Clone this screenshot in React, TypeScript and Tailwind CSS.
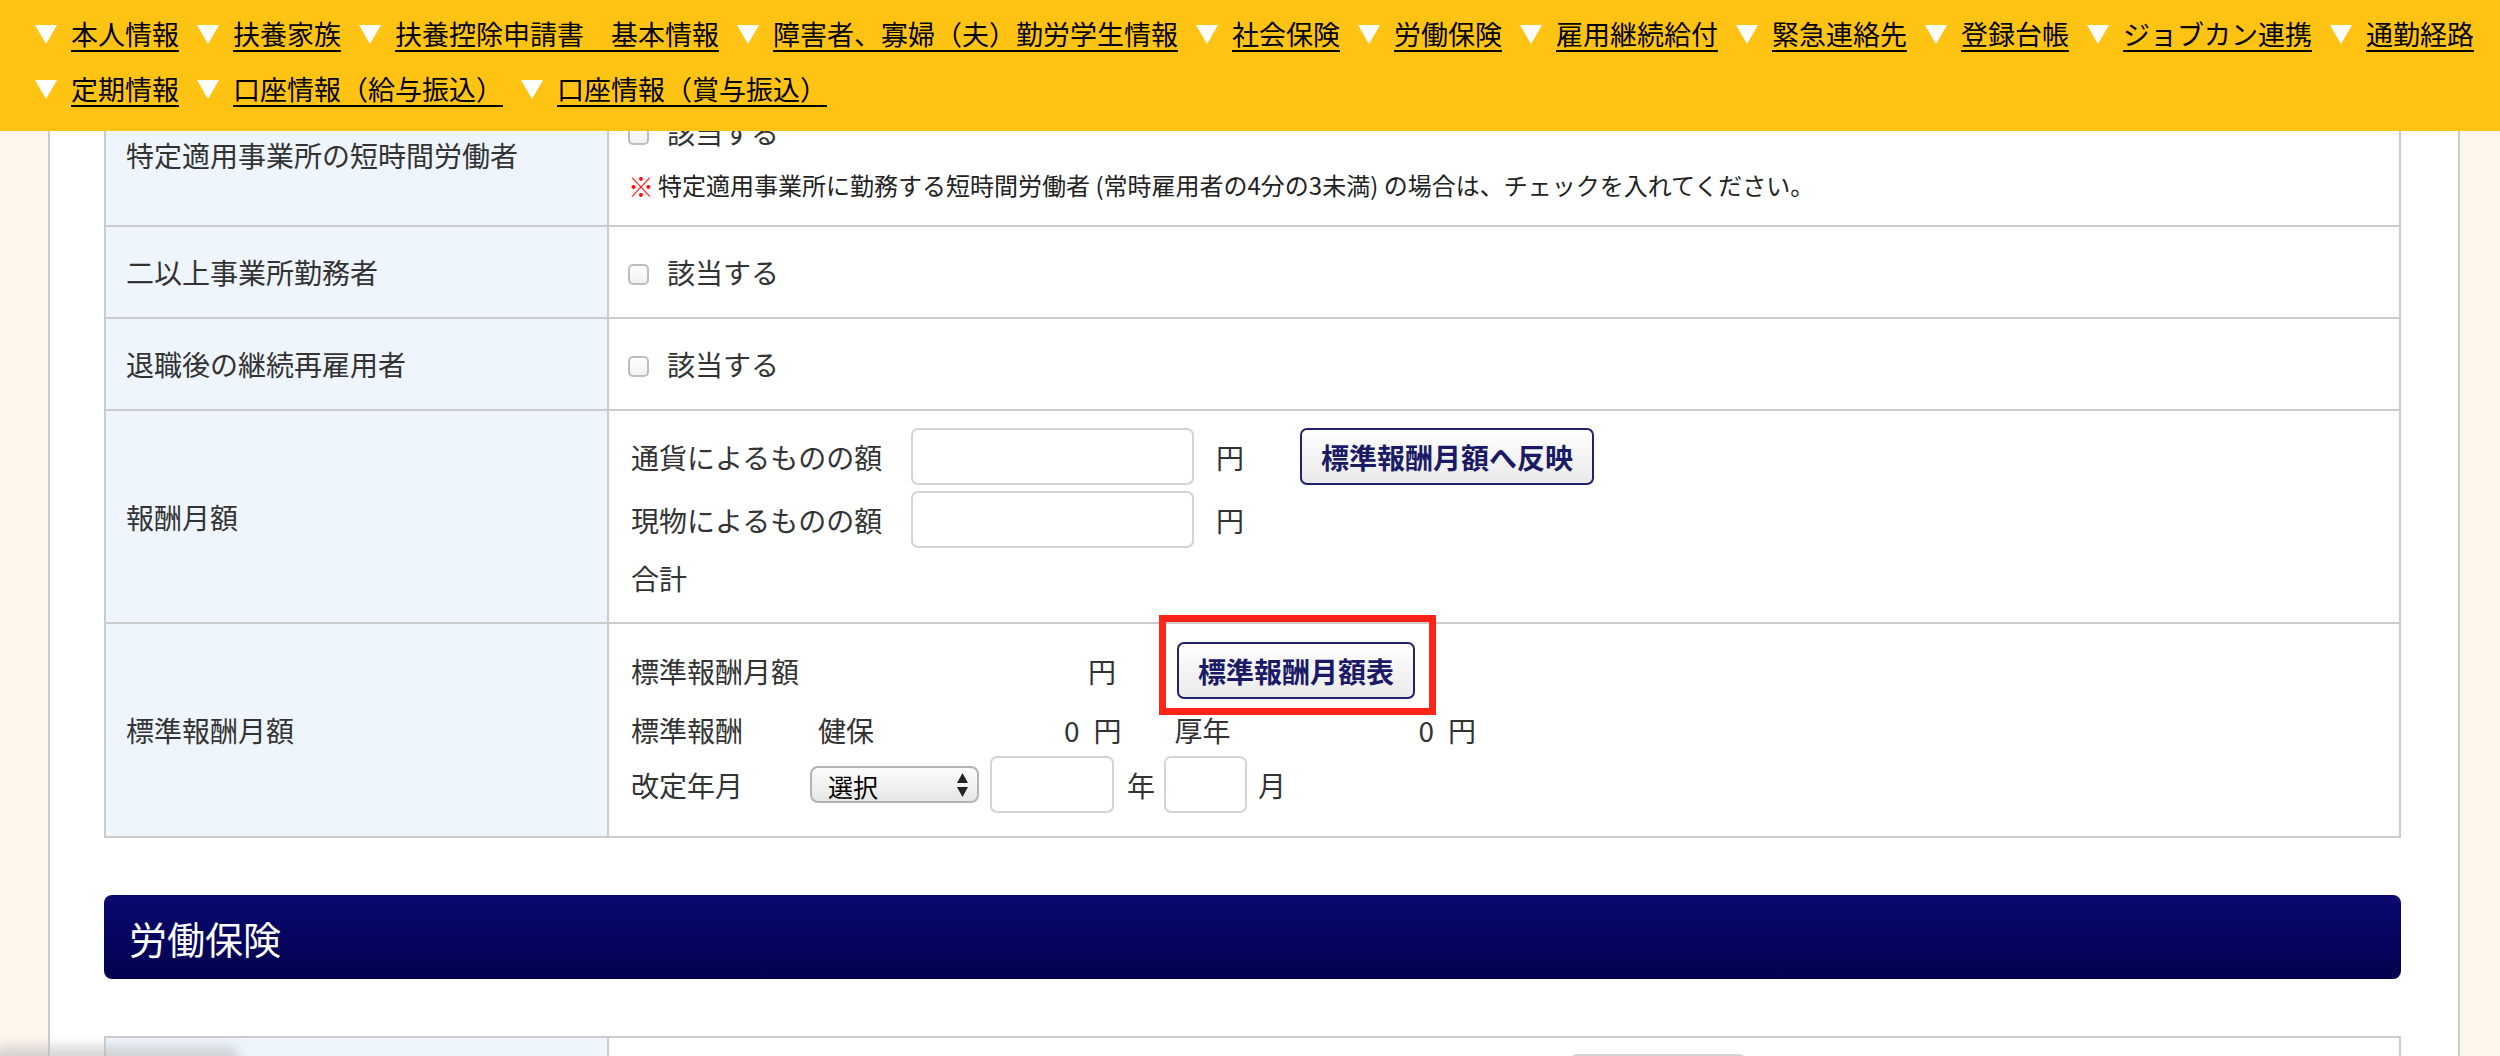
import React from "react";

const NAV_ROW_1 = [
  "本人情報",
  "扶養家族",
  "扶養控除申請書　基本情報",
  "障害者、寡婦（夫）勤労学生情報",
  "社会保険",
  "労働保険",
  "雇用継続給付",
  "緊急連絡先",
  "登録台帳",
  "ジョブカン連携",
  "通勤経路",
];
const NAV_ROW_2 = ["定期情報", "口座情報（給与振込）", "口座情報（賞与振込）"];

function Tri() {
  return (
    <svg width="22" height="19" viewBox="0 0 22 19" className="shrink-0">
      <polygon points="0,0 22,0 11,19" fill="#ffffff" />
    </svg>
  );
}

function NavRow({ items }: { items: string[] }) {
  return (
    <div className="flex h-[55px] items-center whitespace-nowrap pl-[35px]">
      {items.map((t) => (
        <a key={t} href="#" className="mr-[18px] flex items-center gap-[14px] text-black">
          <Tri />
          <span className="underline decoration-2 underline-offset-[5px]">{t}</span>
        </a>
      ))}
    </div>
  );
}

function Check() {
  return (
    <span className="mt-[4px] inline-block h-[21px] w-[21px] shrink-0 rounded-[5px] border-2 border-[#bdbdbd] bg-linear-to-b from-white to-[#f1f1f1]" />
  );
}

function TextBox({ className }: { className: string }) {
  return (
    <input
      type="text"
      readOnly
      className={`h-[57px] rounded-[7px] border-2 border-[#d4d4d4] bg-white ${className}`}
    />
  );
}

function NavyButton({ children }: { children: React.ReactNode }) {
  return (
    <button className="h-[57px] whitespace-nowrap rounded-[7px] border-2 border-[#22226e] bg-linear-to-b from-white to-[#eaeaea] px-[19px] text-[28px] font-bold leading-none text-[#1a1a66]">
      {children}
    </button>
  );
}

function Row({
  h,
  label,
  children,
}: {
  h: string;
  label: string;
  children: React.ReactNode;
}) {
  return (
    <div className={`grid grid-cols-[503px_1fr] border-b-2 border-[#cccccc] ${h}`}>
      <div className="flex items-center border-r-2 border-[#cccccc] bg-[#eef5fd] pl-[20px] text-[28px]">
        {label}
      </div>
      {children}
    </div>
  );
}

export default function App() {
  return (
    <div className="relative min-h-screen overflow-hidden bg-[#fdf6ec] font-['Noto_Sans_CJK_JP',sans-serif] text-[#333333]">
      <header className="fixed inset-x-0 top-0 z-20 bg-[#ffc314] pb-[14px] pt-[7px] text-[27px]">
        <NavRow items={NAV_ROW_1} />
        <NavRow items={NAV_ROW_2} />
      </header>

      <div className="ml-[48px] min-h-screen w-[2412px] border-x-2 border-[#cccccc] bg-white pl-[54px] pr-[57px] pt-[85px]">
        <div className="border-x-2 border-[#cccccc]">
          <Row h="h-[142px]" label="特定適用事業所の短時間労働者">
            <div className="flex flex-col pl-[19px] pt-[27px]">
              <div className="flex h-[40px] items-center gap-[18px] text-[28px]">
                <Check />
                <span>該当する</span>
              </div>
              <div className="mt-[15px] flex h-[36px] items-center text-[24px] text-[#222222]">
                <span className="text-[26px] font-bold text-[#ff1010]">※</span>
                <span className="ml-[4px]">
                  特定適用事業所に勤務する短時間労働者 (常時雇用者の4分の3未満) の場合は、チェックを入れてください。
                </span>
              </div>
            </div>
          </Row>

          <Row h="h-[92px]" label="二以上事業所勤務者">
            <div className="flex items-center gap-[18px] pl-[19px] text-[28px]">
              <Check />
              <span>該当する</span>
            </div>
          </Row>

          <Row h="h-[92px]" label="退職後の継続再雇用者">
            <div className="flex items-center gap-[18px] pl-[19px] text-[28px]">
              <Check />
              <span>該当する</span>
            </div>
          </Row>

          <Row h="h-[213px]" label="報酬月額">
            <div className="flex flex-col pl-[22px] pt-[17px] text-[28px]">
              <div className="flex h-[57px] items-center">
                <span className="w-[280px]">通貨によるものの額</span>
                <TextBox className="w-[283px]" />
                <span className="ml-[22px]">円</span>
                <div className="ml-[56px]">
                  <NavyButton>標準報酬月額へ反映</NavyButton>
                </div>
              </div>
              <div className="mt-[6px] flex h-[57px] items-center">
                <span className="w-[280px]">現物によるものの額</span>
                <TextBox className="w-[283px]" />
                <span className="ml-[22px]">円</span>
              </div>
              <div className="mt-[10px] flex h-[40px] items-center">
                <span>合計</span>
              </div>
            </div>
          </Row>

          <Row h="h-[214px]" label="標準報酬月額">
            <div className="flex flex-col pl-[22px] pt-[18px] text-[28px]">
              <div className="flex h-[57px] items-center">
                <span className="w-[457px]">標準報酬月額</span>
                <span>円</span>
                <div className="relative ml-[61px]">
                  <NavyButton>標準報酬月額表</NavyButton>
                  <div className="pointer-events-none absolute -bottom-[16px] -left-[18px] -right-[21px] -top-[27px] border-[7px] border-[#ff2418]" />
                </div>
              </div>
              <div className="mt-[11px] flex h-[40px] items-center">
                <span className="w-[187px]">標準報酬</span>
                <span className="w-[246px]">健保</span>
                <span>0</span>
                <span className="ml-[14px]">円</span>
                <span className="ml-[53px] w-[244px]">厚年</span>
                <span>0</span>
                <span className="ml-[14px]">円</span>
              </div>
              <div className="mt-[6px] flex h-[57px] items-center">
                <span className="w-[179px]">改定年月</span>
                <div className="flex h-[37px] w-[169px] items-center justify-between rounded-[8px] border-2 border-[#b4b4b4] bg-linear-to-b from-[#fdfdfd] to-[#e6e6e6] pl-[16px] pr-[9px] text-[25px] text-black">
                  <span className="pt-[3px] leading-[28px]">選択</span>
                  <svg width="11" height="24" viewBox="0 0 11 24">
                    <polygon points="0,10 5.5,0 11,10" fill="#222222" />
                    <polygon points="0,14 11,14 5.5,24" fill="#222222" />
                  </svg>
                </div>
                <TextBox className="ml-[11px] w-[124px]" />
                <span className="ml-[13px]">年</span>
                <TextBox className="ml-[9px] w-[83px]" />
                <span className="ml-[11px]">月</span>
              </div>
            </div>
          </Row>
        </div>

        <div className="mt-[57px] flex h-[84px] items-center rounded-[8px] bg-linear-to-b from-[#0a0a70] to-[#02024f] pl-[25px] text-[38px] text-white">
          労働保険
        </div>

        <div className="mt-[57px] border-x-2 border-t-2 border-[#cccccc]">
          <div className="grid h-[120px] grid-cols-[503px_1fr]">
            <div className="border-r-2 border-[#cccccc] bg-[#eef5fd]" />
            <div className="pl-[961px] pt-[16px]">
              <TextBox className="w-[176px]" />
            </div>
          </div>
        </div>
      </div>

      <div className="pointer-events-none fixed -bottom-[30px] left-[-10px] h-[40px] w-[250px] rounded-[16px] bg-[#bdbdbd]/60 blur-[6px]" />
    </div>
  );
}
